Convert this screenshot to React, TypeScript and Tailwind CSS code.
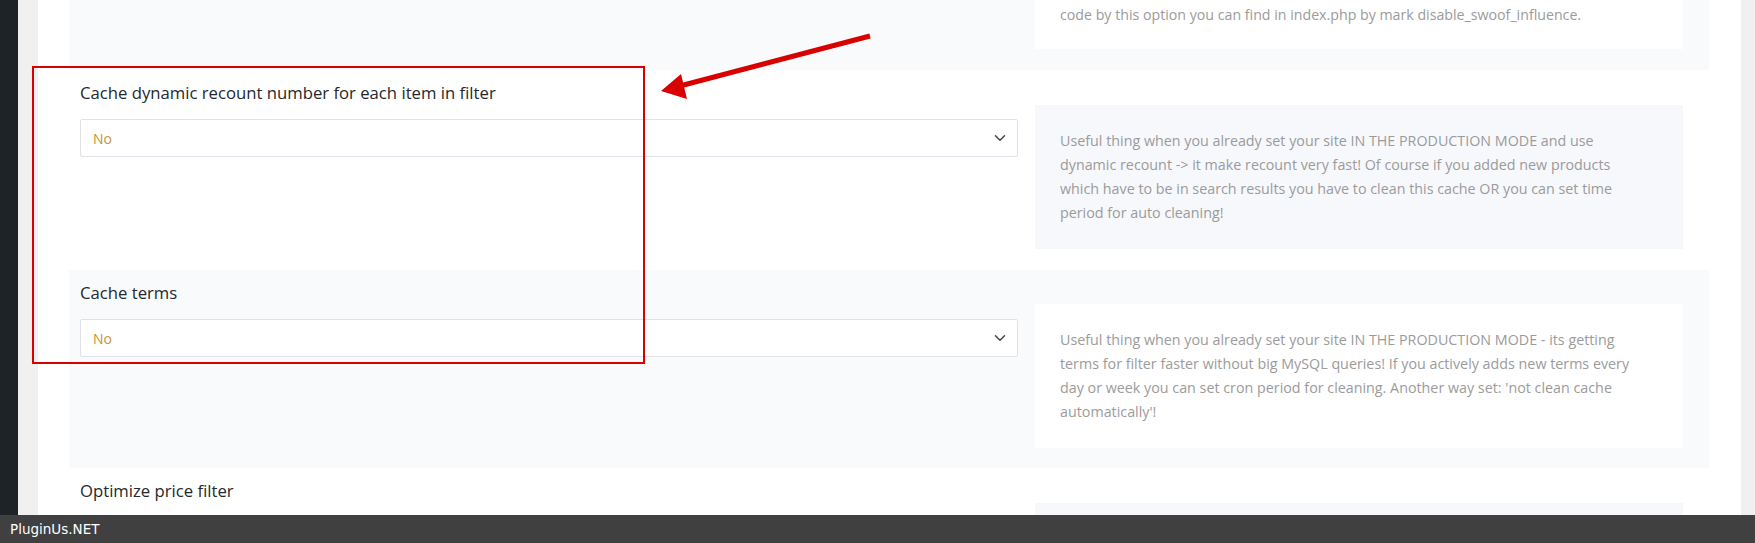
import { ChevronDown } from 'lucide-react';

interface Setting {
  label: string;
  lines: string[];
}

const cacheCount: Setting = {
  label: 'Cache dynamic recount number for each item in filter',
  lines: [
    'Useful thing when you already set your site IN THE PRODUCTION MODE and use',
    'dynamic recount -> it make recount very fast! Of course if you added new products',
    'which have to be in search results you have to clean this cache OR you can set time',
    'period for auto cleaning!',
  ],
};

const cacheTerms: Setting = {
  label: 'Cache terms',
  lines: [
    'Useful thing when you already set your site IN THE PRODUCTION MODE - its getting',
    'terms for filter faster without big MySQL queries! If you actively adds new terms every',
    "day or week you can set cron period for cleaning. Another way set: 'not clean cache",
    "automatically'!",
  ],
};

function SelectBox() {
  return (
    <div className="mt-[14px] h-[38px] w-[938px] flex items-center justify-between rounded-[2px] border border-[#dfe2e8] bg-white pl-[12px] pr-[8px]">
      <span className="text-[14px] text-[#c99434]">No</span>
      <ChevronDown className="h-[18px] w-[18px] text-[#444]" strokeWidth={2} />
    </div>
  );
}

function Description({ lines, tone }: { lines: string[]; tone: 'white' | 'gray' }) {
  return (
    <div
      className={`w-[648px] px-[25px] py-[24px] text-[14.3px] leading-[24px] text-[#9b9b9b] ${
        tone === 'white' ? 'bg-white' : 'bg-[#f7f8fb]'
      }`}
    >
      {lines.map((line) => (
        <div key={line} className="whitespace-nowrap">
          {line}
        </div>
      ))}
    </div>
  );
}

function SettingRow({ setting, shaded, height, boxTop }: { setting: Setting; shaded: boolean; height: string; boxTop: string }) {
  return (
    <div className={`flex gap-[17px] pl-[11px] ${height} ${shaded ? 'bg-[#f9fafc]' : 'bg-white'}`}>
      <div className="w-[938px] pt-[11px]">
        <div className="text-[16.7px] leading-[24px] text-[#23282d]">{setting.label}</div>
        <SelectBox />
      </div>
      <div className={boxTop}>
        <Description lines={setting.lines} tone={shaded ? 'white' : 'gray'} />
      </div>
    </div>
  );
}

export default function App() {
  return (
    <div className="relative flex h-[543px] w-[1755px] overflow-hidden bg-white font-['Open_Sans',sans-serif]">
      <div className="w-[18px] shrink-0 bg-[#1d2327]" />
      <div className="w-[20px] shrink-0 bg-[#f0f0f1]" />

      <div className="flex-1 pl-[31px] pr-[32px]">
        {/* tail of the previous option */}
        <div className="flex h-[70px] gap-[17px] bg-[#f9fafc] pl-[11px]">
          <div className="w-[938px]" />
          <div className="h-[49px] w-[648px] bg-white px-[25px] pt-[3px] text-[14.2px] leading-[24px] text-[#9b9b9b]">
            code by this option you can find in index.php by mark disable_swoof_influence.
          </div>
        </div>

        <SettingRow setting={cacheCount} shaded={false} height="h-[200px]" boxTop="pt-[35px]" />
        <SettingRow setting={cacheTerms} shaded={true} height="h-[198px]" boxTop="pt-[34px]" />

        <div className="flex gap-[17px] bg-white pl-[11px]">
          <div className="w-[938px] pt-[11px]">
            <div className="text-[16.7px] leading-[24px] text-[#23282d]">Optimize price filter</div>
          </div>
          <div className="pt-[35px]">
            <div className="h-[60px] w-[648px] bg-[#f7f8fb]" />
          </div>
        </div>
      </div>

      <div className="w-[14px] shrink-0 bg-[#f0f0f1]" />

      {/* annotation */}
      <div className="absolute left-[32px] top-[66px] h-[298px] w-[613px] border-2 border-[#d90000]" />
      <svg className="absolute left-[650px] top-[25px]" width="230" height="80" viewBox="0 0 230 80">
        <line x1="220" y1="11" x2="26" y2="62" stroke="#d90000" strokeWidth="5" />
        <polygon points="11,66 31,49 37,74" fill="#d90000" />
      </svg>

      <div className="absolute bottom-0 left-0 right-0 flex h-[28px] items-center bg-[#404040] pl-[10px] font-['DejaVu_Sans',sans-serif] text-[13.5px] text-white">
        PluginUs.NET
      </div>
    </div>
  );
}
